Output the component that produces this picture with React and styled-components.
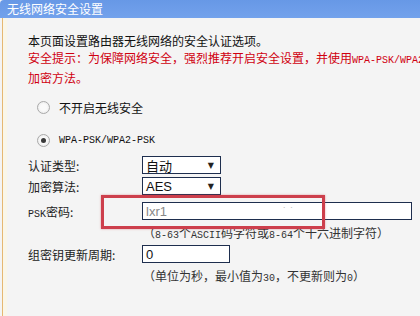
import styled, { createGlobalStyle } from "styled-components";

const GlobalStyle = createGlobalStyle`
  body {
    margin: 0;
    background: #f4f4f4;
    overflow: hidden;
    font-family: "Noto Sans CJK SC", "Liberation Sans", sans-serif;
  }
`;

const Page = styled.div`
  width: 420px;
  height: 316px;
  overflow: hidden;
  background: #f4f4f4;
`;

const TitleBar = styled.div`
  height: 18px;
  line-height: 18px;
  padding-left: 7px;
  background: linear-gradient(#6798e6, #73a2ec);
  border-top-left-radius: 4px;
  color: #fff;
  font-size: 12px;
  white-space: nowrap;
`;

const Panel = styled.div`
  position: relative;
  margin-left: 2px;
  padding: 14px 0 0 25px;
  border-left: 1px solid #e6b872;
  box-shadow: inset 4px 0 0 #faf6e8;
  height: 300px;
`;

const Line = styled.div`
  font-size: 12px;
  line-height: 17px;
  color: ${(p) => (p.$warn ? "#d00010" : "#111")};
  white-space: nowrap;
`;

const Mono = styled.span`
  font-family: "Liberation Mono", monospace;
  font-size: 10px;
`;

const RadioRow = styled.label`
  display: flex;
  align-items: center;
  gap: 9px;
  height: 20px;
  margin-top: ${(p) => p.$top}px;
  padding-left: 9px;
  font-size: 12px;
  color: #111;
`;

const Radio = styled.span`
  width: 11px;
  height: 11px;
  border-radius: 50%;
  border: 1px solid #a9a9a9;
  background: radial-gradient(circle, #fafafa 40%, #e4e4e4 100%);
  display: flex;
  align-items: center;
  justify-content: center;
  flex: none;

  &::after {
    content: "";
    width: 5px;
    height: 5px;
    border-radius: 50%;
    background: ${(p) => (p.$checked ? "#3a3a3a" : "transparent")};
  }
`;

const Field = styled.div`
  display: grid;
  grid-template-columns: 114px auto;
  align-items: center;
  margin-top: ${(p) => p.$top}px;
  font-size: 12px;
  color: #222;
`;

const Label = styled.span`
  white-space: nowrap;
`;

const Select = styled.div`
  box-sizing: border-box;
  width: 79px;
  height: 18px;
  border: 1px solid #1e2e4e;
  background: #fff;
  display: flex;
  align-items: center;
  justify-content: space-between;
  padding: 0 6px 0 3px;
  font-size: 13px;
  color: #111;
  font-family: ${(p) => (p.$latin ? '"Liberation Sans", sans-serif' : "inherit")};

  &::after {
    content: "▼";
    font-family: "DejaVu Sans", sans-serif;
    font-size: 8px;
    color: #222;
  }
`;

const Input = styled.div`
  box-sizing: border-box;
  width: ${(p) => p.$w}px;
  height: ${(p) => p.$h || 18}px;
  border: 1px solid #1e2e4e;
  background: #fff;
  display: flex;
  align-items: center;
  padding-left: 3px;
  font-family: "Liberation Sans", sans-serif;
  font-size: 13px;
  color: ${(p) => (p.$faint ? "#888" : "#111")};
  gap: 4px;
`;

const Blur = styled.span`
  margin-left: 112px;
  color: #bbb;
  font-size: 10px;
  letter-spacing: 4px;
`;

const Hint = styled.div`
  margin: ${(p) => p.$top}px 0 0 115px;
  font-size: 12px;
  line-height: 15px;
  color: #333;
  white-space: nowrap;
`;

const Highlight = styled.div`
  position: absolute;
  left: 98px;
  top: 177px;
  width: 218px;
  height: 28px;
  border: 3px solid #cd3f4c;
  box-shadow: 0 0 2px rgba(205, 63, 76, 0.5);
  pointer-events: none;
`;

export default function App() {
  return (
    <Page>
      <GlobalStyle />
      <TitleBar>无线网络安全设置</TitleBar>
      <Panel>
        <Line>本页面设置路由器无线网络的安全认证选项。</Line>
        <Line $warn>
          安全提示：为保障网络安全，强烈推荐开启安全设置，并使用
          <Mono>WPA-PSK/WPA2-PSK AES</Mono>
        </Line>
        <Line $warn>加密方法。</Line>

        <RadioRow $top={11}>
          <Radio />
          不开启无线安全
        </RadioRow>
        <RadioRow $top={13}>
          <Radio $checked />
          <Mono>WPA-PSK/WPA2-PSK</Mono>
        </RadioRow>

        <Field $top={6}>
          <Label>认证类型:</Label>
          <Select>自动</Select>
        </Field>
        <Field $top={3}>
          <Label>加密算法:</Label>
          <Select $latin>AES</Select>
        </Field>
        <Field $top={7}>
          <Label>
            <Mono>PSK</Mono>密码:
          </Label>
          <Input $w={270} $faint>
            lxr1<Blur>˙˙</Blur>
          </Input>
        </Field>
        <Hint $top={5}>
          （<Mono>8-63</Mono>个<Mono>ASCII</Mono>码字符或<Mono>8-64</Mono>个十六进制字符）
        </Hint>
        <Field $top={2}>
          <Label>组密钥更新周期:</Label>
          <Input $w={88} $h={18}>
            0
          </Input>
        </Field>
        <Hint $top={5}>
          （单位为秒，最小值为<Mono>30</Mono>，不更新则为<Mono>0</Mono>）
        </Hint>
        <RadioRow $top={26}>
          <Radio />
        </RadioRow>

        <Highlight />
      </Panel>
    </Page>
  );
}
